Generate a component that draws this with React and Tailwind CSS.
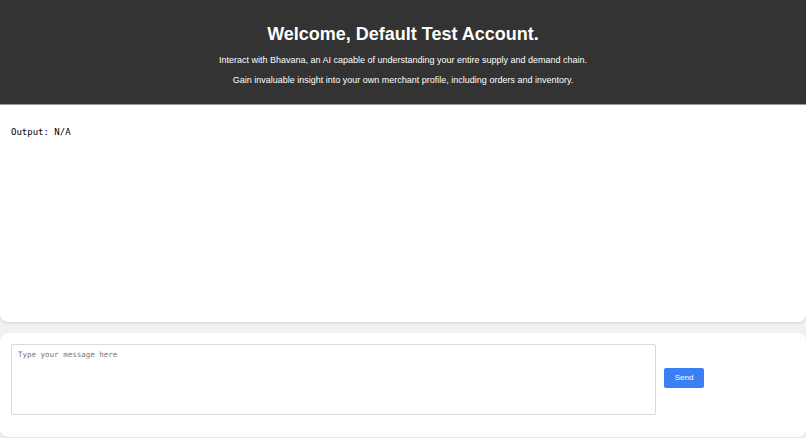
import React, { useState } from "react";

export default function App() {
  const [message, setMessage] = useState("");
  const [output, setOutput] = useState("N/A");

  const send = () => {
    if (!message.trim()) return;
    setOutput(message.trim());
    setMessage("");
  };

  return (
    <div className="min-h-screen bg-[#f1f1f1] font-['Liberation_Sans',Arial,sans-serif] overflow-hidden">
      {/* Header */}
      <div className="h-[105px] bg-[#333333] border-b border-[#9a9a9a] flex flex-col items-center text-white">
        <h1 className="mt-[23px] text-[18px] leading-[22px] font-bold">Welcome, Default Test Account.</h1>
        <p className="mt-[10px] text-[9px] leading-[11px]">
          Interact with Bhavana, an AI capable of understanding your entire supply and demand chain.
        </p>
        <p className="mt-[9px] text-[9px] leading-[11px]">
          Gain invaluable insight into your own merchant profile, including orders and inventory.
        </p>
      </div>

      {/* Output */}
      <div className="h-[217px] bg-white rounded-b-lg shadow-[0_1px_3px_rgba(0,0,0,0.12)] px-[11px] pt-[21px]">
        <pre className="font-['DejaVu_Sans_Mono',Menlo,monospace] text-[9px] leading-[12px] text-black">
          Output: {output}
        </pre>
      </div>

      {/* Input */}
      <div className="mt-[11px] h-[104px] bg-white rounded-lg shadow-[0_1px_3px_rgba(0,0,0,0.08)] pl-[11px] pt-[11px] flex items-start">
        <textarea
          value={message}
          onChange={(e) => setMessage(e.target.value)}
          placeholder="Type your message here"
          className="w-[645px] h-[71px] resize-none border border-[#d9d9d9] rounded-[2px] px-[6px] py-[5px] font-['DejaVu_Sans_Mono',Menlo,monospace] text-[7.5px] leading-[10px] text-[#333] placeholder-[#777] focus:outline-none"
        />
        <button
          onClick={send}
          className="ml-[8px] mt-[24px] w-[40px] h-[20px] bg-[#3b7ff5] hover:bg-[#2f6de0] text-white text-[8px] rounded-[2px]"
        >
          Send
        </button>
      </div>
    </div>
  );
}
